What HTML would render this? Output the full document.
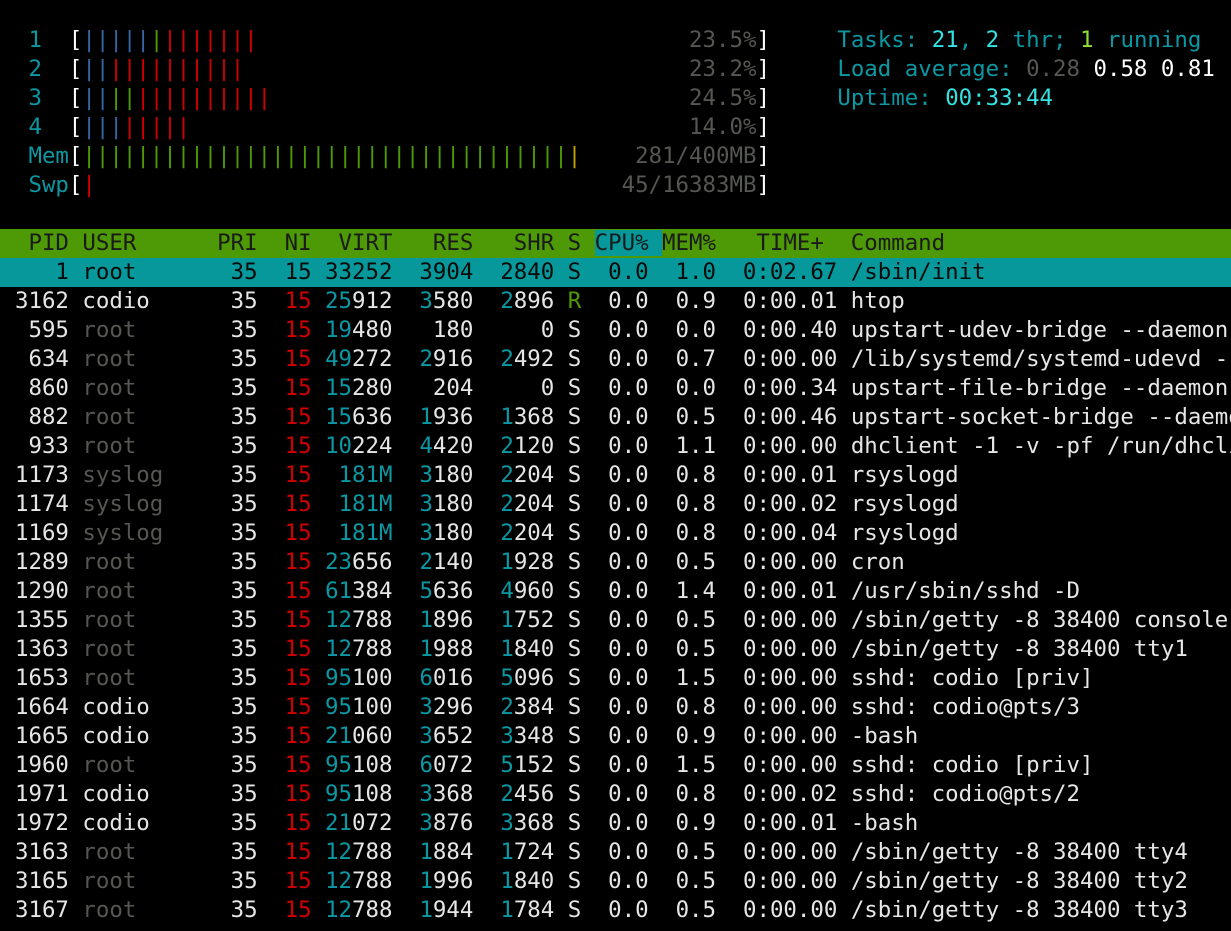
<!DOCTYPE html>
<html><head><meta charset="utf-8"><style>
html,body{margin:0;padding:0;background:#000;width:1231px;height:931px;overflow:hidden}
#t{position:absolute;left:1.5px;top:26px;font-family:"DejaVu Sans Mono","Liberation Mono",monospace;font-size:22.4px;color:#e6e6e6}
.l{height:29px;line-height:29px;white-space:pre;width:1229px;overflow:hidden}
.c{color:#0b98a3}.C{color:#34e2e2}.r{color:#d00000}.g{color:#555753}.G{color:#4e9a06}.b{color:#3465a4}.y{color:#c4a000}.w{color:#fff}.L{color:#8ae234}
.hd{background:#4e9a06;color:#1a1a1a;margin-left:-2px;padding-left:2px}
.sel{background:#06989a;color:#0a0a0a;margin-left:-2px;padding-left:2px}
.hc{background:#06989a}
</style></head><body><div id="t">
<div class="l">  <span class="c">1</span>  <span class="w">[</span><span class="b">|||||</span><span class="G">|</span><span class="r">|||||||</span>                                <span class="g">23.5%</span><span class="w">]</span>     <span class="c">Tasks: </span><span class="C">21</span><span class="c">, </span><span class="C">2</span><span class="c"> thr; </span><span class="L">1</span><span class="c"> running</span></div>
<div class="l">  <span class="c">2</span>  <span class="w">[</span><span class="b">||</span><span class="r">||||||||||</span>                                 <span class="g">23.2%</span><span class="w">]</span>     <span class="c">Load average: </span><span class="g">0.28 </span><span class="w">0.58 0.81</span></div>
<div class="l">  <span class="c">3</span>  <span class="w">[</span><span class="b">||</span><span class="G">||</span><span class="r">||||||||||</span>                               <span class="g">24.5%</span><span class="w">]</span>     <span class="c">Uptime: </span><span class="C">00:33:44</span></div>
<div class="l">  <span class="c">4</span>  <span class="w">[</span><span class="b">|||</span><span class="r">|||||</span>                                     <span class="g">14.0%</span><span class="w">]</span></div>
<div class="l">  <span class="c">Mem</span><span class="w">[</span><span class="G">||||||||||||||||||||||||||||||||||||</span><span class="y">|</span>    <span class="g">281/400MB</span><span class="w">]</span></div>
<div class="l">  <span class="c">Swp</span><span class="w">[</span><span class="r">|</span>                                       <span class="g">45/16383MB</span><span class="w">]</span></div>
<div class="l"> </div>
<div class="l hd">  PID USER      PRI  NI  VIRT   RES   SHR S <span class="hc">CPU% </span>MEM%   TIME+  Command</div>
<div class="l sel">    1 root       35  15 33252  3904  2840 S  0.0  1.0  0:02.67 /sbin/init</div>
<div class="l"> 3162 codio      35 <span class="r"> 15</span> <span class="c">25</span>912  <span class="c">3</span>580  <span class="c">2</span>896 <span class="G">R</span>  0.0  0.9  0:00.01 htop</div>
<div class="l">  595 <span class="g">root     </span>  35 <span class="r"> 15</span> <span class="c">19</span>480   180     0 S  0.0  0.0  0:00.40 upstart-udev-bridge --daemon</div>
<div class="l">  634 <span class="g">root     </span>  35 <span class="r"> 15</span> <span class="c">49</span>272  <span class="c">2</span>916  <span class="c">2</span>492 S  0.0  0.7  0:00.00 /lib/systemd/systemd-udevd --daemon</div>
<div class="l">  860 <span class="g">root     </span>  35 <span class="r"> 15</span> <span class="c">15</span>280   204     0 S  0.0  0.0  0:00.34 upstart-file-bridge --daemon</div>
<div class="l">  882 <span class="g">root     </span>  35 <span class="r"> 15</span> <span class="c">15</span>636  <span class="c">1</span>936  <span class="c">1</span>368 S  0.0  0.5  0:00.46 upstart-socket-bridge --daemon</div>
<div class="l">  933 <span class="g">root     </span>  35 <span class="r"> 15</span> <span class="c">10</span>224  <span class="c">4</span>420  <span class="c">2</span>120 S  0.0  1.1  0:00.00 dhclient -1 -v -pf /run/dhclient</div>
<div class="l"> 1173 <span class="g">syslog   </span>  35 <span class="r"> 15</span> <span class="c"> 181M</span>  <span class="c">3</span>180  <span class="c">2</span>204 S  0.0  0.8  0:00.01 rsyslogd</div>
<div class="l"> 1174 <span class="g">syslog   </span>  35 <span class="r"> 15</span> <span class="c"> 181M</span>  <span class="c">3</span>180  <span class="c">2</span>204 S  0.0  0.8  0:00.02 rsyslogd</div>
<div class="l"> 1169 <span class="g">syslog   </span>  35 <span class="r"> 15</span> <span class="c"> 181M</span>  <span class="c">3</span>180  <span class="c">2</span>204 S  0.0  0.8  0:00.04 rsyslogd</div>
<div class="l"> 1289 <span class="g">root     </span>  35 <span class="r"> 15</span> <span class="c">23</span>656  <span class="c">2</span>140  <span class="c">1</span>928 S  0.0  0.5  0:00.00 cron</div>
<div class="l"> 1290 <span class="g">root     </span>  35 <span class="r"> 15</span> <span class="c">61</span>384  <span class="c">5</span>636  <span class="c">4</span>960 S  0.0  1.4  0:00.01 /usr/sbin/sshd -D</div>
<div class="l"> 1355 <span class="g">root     </span>  35 <span class="r"> 15</span> <span class="c">12</span>788  <span class="c">1</span>896  <span class="c">1</span>752 S  0.0  0.5  0:00.00 /sbin/getty -8 38400 console</div>
<div class="l"> 1363 <span class="g">root     </span>  35 <span class="r"> 15</span> <span class="c">12</span>788  <span class="c">1</span>988  <span class="c">1</span>840 S  0.0  0.5  0:00.00 /sbin/getty -8 38400 tty1</div>
<div class="l"> 1653 <span class="g">root     </span>  35 <span class="r"> 15</span> <span class="c">95</span>100  <span class="c">6</span>016  <span class="c">5</span>096 S  0.0  1.5  0:00.00 sshd: codio [priv]</div>
<div class="l"> 1664 codio      35 <span class="r"> 15</span> <span class="c">95</span>100  <span class="c">3</span>296  <span class="c">2</span>384 S  0.0  0.8  0:00.00 sshd: codio@pts/3</div>
<div class="l"> 1665 codio      35 <span class="r"> 15</span> <span class="c">21</span>060  <span class="c">3</span>652  <span class="c">3</span>348 S  0.0  0.9  0:00.00 -bash</div>
<div class="l"> 1960 <span class="g">root     </span>  35 <span class="r"> 15</span> <span class="c">95</span>108  <span class="c">6</span>072  <span class="c">5</span>152 S  0.0  1.5  0:00.00 sshd: codio [priv]</div>
<div class="l"> 1971 codio      35 <span class="r"> 15</span> <span class="c">95</span>108  <span class="c">3</span>368  <span class="c">2</span>456 S  0.0  0.8  0:00.02 sshd: codio@pts/2</div>
<div class="l"> 1972 codio      35 <span class="r"> 15</span> <span class="c">21</span>072  <span class="c">3</span>876  <span class="c">3</span>368 S  0.0  0.9  0:00.01 -bash</div>
<div class="l"> 3163 <span class="g">root     </span>  35 <span class="r"> 15</span> <span class="c">12</span>788  <span class="c">1</span>884  <span class="c">1</span>724 S  0.0  0.5  0:00.00 /sbin/getty -8 38400 tty4</div>
<div class="l"> 3165 <span class="g">root     </span>  35 <span class="r"> 15</span> <span class="c">12</span>788  <span class="c">1</span>996  <span class="c">1</span>840 S  0.0  0.5  0:00.00 /sbin/getty -8 38400 tty2</div>
<div class="l"> 3167 <span class="g">root     </span>  35 <span class="r"> 15</span> <span class="c">12</span>788  <span class="c">1</span>944  <span class="c">1</span>784 S  0.0  0.5  0:00.00 /sbin/getty -8 38400 tty3</div>
</div></body></html>
